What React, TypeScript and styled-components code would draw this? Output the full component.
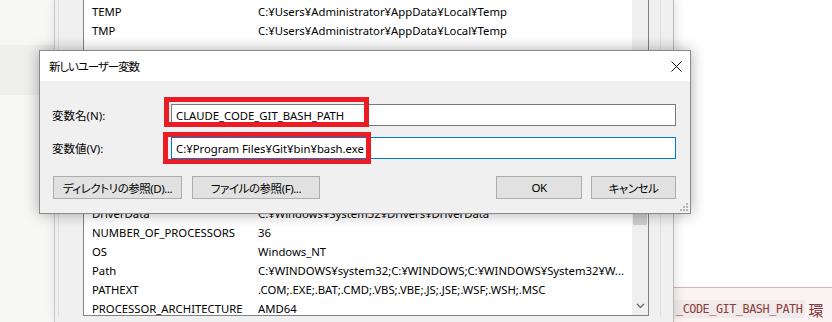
import React from 'react';
import styled, { createGlobalStyle } from 'styled-components';

const GlobalStyle = createGlobalStyle`
  html, body {
    margin: 0;
    padding: 0;
    background: #ffffff;
  }
  body {
    font-family: "Segoe UI", "Noto Sans", "Noto Sans CJK JP", sans-serif;
    font-size: 11.3px;
    color: #000;
    font-feature-settings: "palt";
  }
`;

const uiFont = `"Segoe UI", "Noto Sans", "Noto Sans CJK JP", sans-serif`;
const jaFont = `"Noto Sans CJK JP", sans-serif`;

type EnvRow = { name: string; value: string };

const topRows: EnvRow[] = [
    { name: 'TEMP', value: 'C:¥Users¥Administrator¥AppData¥Local¥Temp' },
    { name: 'TMP', value: 'C:¥Users¥Administrator¥AppData¥Local¥Temp' },
];

const bottomRows: EnvRow[] = [
    { name: 'DriverData', value: 'C:¥Windows¥System32¥Drivers¥DriverData' },
    { name: 'NUMBER_OF_PROCESSORS', value: '36' },
    { name: 'OS', value: 'Windows_NT' },
    { name: 'Path', value: 'C:¥WINDOWS¥system32;C:¥WINDOWS;C:¥WINDOWS¥System32¥W...' },
    { name: 'PATHEXT', value: '.COM;.EXE;.BAT;.CMD;.VBS;.VBE;.JS;.JSE;.WSF;.WSH;.MSC' },
    { name: 'PROCESSOR_ARCHITECTURE', value: 'AMD64' },
];

const App: React.FC = () => {
    return (
        <>
            <GlobalStyle />
            <Screen>
                <LeftPane>
                    <HoverBand />
                </LeftPane>

                <EnvWindow>
                    <GroupFrame>
                        <VarList>
                            <RowsArea>
                                {topRows.map(r => (
                                    <ListRow key={r.name}>
                                        <NameCell>{r.name}</NameCell>
                                        <ValueCell>{r.value}</ValueCell>
                                    </ListRow>
                                ))}
                                <HiddenGap />
                                {bottomRows.map(r => (
                                    <ListRow key={r.name}>
                                        <NameCell>{r.name}</NameCell>
                                        <ValueCell>{r.value}</ValueCell>
                                    </ListRow>
                                ))}
                            </RowsArea>
                            <ScrollBar>
                                <Thumb />
                                <ScrollArrow>
                                    <svg width="9" height="6" viewBox="0 0 9 6">
                                        <path d="M1 1 L4.5 4.5 L8 1" fill="none" stroke="#606060" strokeWidth="1.2" />
                                    </svg>
                                </ScrollArrow>
                            </ScrollBar>
                        </VarList>
                    </GroupFrame>
                </EnvWindow>

                <RightPane>
                    <NoteStrip>
                        <CodeChip>_CODE_GIT_BASH_PATH</CodeChip>
                        <NoteText>環</NoteText>
                    </NoteStrip>
                </RightPane>

                <Dialog>
                    <TitleBar>
                        <Title>新しいユーザー変数</Title>
                        <CloseBtn>
                            <svg width="11" height="11" viewBox="0 0 11 11">
                                <path d="M0.5 0.5 L10.5 10.5 M10.5 0.5 L0.5 10.5" stroke="#111" strokeWidth="1" />
                            </svg>
                        </CloseBtn>
                    </TitleBar>
                    <DialogBody>
                        <FieldRow>
                            <FieldLabel>変数名(N):</FieldLabel>
                            <TextBox>CLAUDE_CODE_GIT_BASH_PATH</TextBox>
                        </FieldRow>
                        <FieldRow>
                            <FieldLabel>変数値(V):</FieldLabel>
                            <TextBox $focused>C:¥Program Files¥Git¥bin¥bash.exe</TextBox>
                        </FieldRow>
                        <ButtonRow>
                            <ButtonGroup>
                                <DlgButton $width={129}>ディレクトリの参照(D)...</DlgButton>
                                <DlgButton $width={128}>ファイルの参照(F)...</DlgButton>
                            </ButtonGroup>
                            <ButtonGroup $gap={9}>
                                <DlgButton $width={86}>OK</DlgButton>
                                <DlgButton $width={85}>キャンセル</DlgButton>
                            </ButtonGroup>
                        </ButtonRow>
                    </DialogBody>
                    <Grip>
                        <svg width="8" height="8" viewBox="0 0 8 8">
                            {[[6, 0], [6, 3], [3, 3], [6, 6], [3, 6], [0, 6]].map(([x, y]) => (
                                <rect key={`${x}-${y}`} x={x} y={y} width="2" height="2" fill="#b4b4b4" />
                            ))}
                        </svg>
                    </Grip>

                    {/* 赤枠の注釈 */}
                    <Highlight $left={124} $top={46} $width={205} $height={30} />
                    <Highlight $left={123} $top={81} $width={208} $height={32} />
                </Dialog>
            </Screen>
        </>
    );
};

const Screen = styled.div`
  position: relative;
  display: flex;
  width: 832px;
  height: 322px;
  overflow: hidden;
  background: #ffffff;
`;

/* 左側：背後のページ */
const LeftPane = styled.div`
  width: 54px;
  flex-shrink: 0;
  background: #f7f7f6;
  padding-top: 45px;
  box-sizing: border-box;
`;

const HoverBand = styled.div`
  height: 50px;
  background: #efefee;
`;

/* 背後の環境変数ウィンドウ */
const EnvWindow = styled.div`
  display: flex;
  width: 620px;
  flex-shrink: 0;
  box-sizing: border-box;
  background: #f0f0f0;
  border-left: 1px solid #c9c9c9;
  border-right: 1px solid #b9b9b9;
  padding: 0 12px 6px 3px;
  box-shadow: 2px 0 10px rgba(0, 0, 0, 0.12);
  z-index: 1;
`;

const GroupFrame = styled.div`
  flex: 1;
  display: flex;
  border-left: 1px solid #dcdcdc;
  border-right: 1px solid #dcdcdc;
  padding: 0 11px 0 24px;
`;

const VarList = styled.div`
  flex: 1;
  display: flex;
  margin-top: -1px;
  border: 1px solid #828282;
  background: #ffffff;
  overflow: hidden;
`;

const RowsArea = styled.div`
  flex: 1;
  padding-top: 2px;
  overflow: hidden;
`;

const ListRow = styled.div`
  display: flex;
  height: 19px;
  align-items: center;
  white-space: nowrap;
  font-family: ${uiFont};
  font-size: 11.3px;
  color: #000;
`;

const NameCell = styled.div`
  width: 166px;
  padding-left: 8px;
  flex-shrink: 0;
`;

const ValueCell = styled.div`
  flex: 1;
  overflow: hidden;
`;

const HiddenGap = styled.div`
  height: 164px;
`;

const ScrollBar = styled.div`
  width: 16px;
  flex-shrink: 0;
  display: flex;
  flex-direction: column;
  background: #f0f0f0;
`;

const Thumb = styled.div`
  margin: 120px 1px 0 1px;
  height: 105px;
  background: #cdcdcd;
`;

const ScrollArrow = styled.div`
  margin-top: auto;
  height: 17px;
  margin-bottom: 1px;
  display: flex;
  align-items: center;
  justify-content: center;
`;

/* 右側：背後のページ */
const RightPane = styled.div`
  flex: 1;
  display: flex;
  flex-direction: column;
  justify-content: flex-end;
  background: #ffffff;
`;

const NoteStrip = styled.div`
  height: 35px;
  box-sizing: border-box;
  border-top: 1px solid #d8b4b4;
  background: #fbf3f3;
  display: flex;
  align-items: center;
  padding-top: 8px;
  white-space: nowrap;
`;

const CodeChip = styled.span`
  font-family: "DejaVu Sans Mono", "Liberation Mono", monospace;
  font-size: 11.8px;
  color: #8c3d3d;
  background: #f1eaea;
  padding: 2px 3px 2px 2px;
  border-radius: 0 3px 3px 0;
  letter-spacing: -0.45px;
`;

const NoteText = styled.span`
  font-family: ${jaFont};
  font-size: 15px;
  color: #7a2e2e;
  margin-left: 3px;
`;

/* 手前のダイアログ */
const Dialog = styled.div`
  position: absolute;
  left: 39px;
  top: 50px;
  width: 652px;
  height: 164px;
  box-sizing: border-box;
  border: 1px solid #8a8a8a;
  background: #f0f0f0;
  box-shadow: 0 0 14px rgba(0, 0, 0, 0.32);
  display: flex;
  flex-direction: column;
  z-index: 5;
  font-family: ${uiFont};
  font-size: 11.3px;
`;

const TitleBar = styled.div`
  height: 30px;
  flex-shrink: 0;
  display: flex;
  align-items: center;
  justify-content: space-between;
  background: #ffffff;
  padding: 0 8px 0 9px;
`;

const Title = styled.div`
  font-family: ${jaFont};
  font-size: 11.5px;
  letter-spacing: -1.1px;
  color: #000;
`;

const CloseBtn = styled.div`
  width: 11px;
  height: 11px;
  display: flex;
`;

const DialogBody = styled.div`
  flex: 1;
  padding: 23px 14px 0 12px;
  display: flex;
  flex-direction: column;
  gap: 11px;
`;

const FieldRow = styled.div`
  display: flex;
  align-items: center;
`;

const FieldLabel = styled.div`
  width: 119px;
  flex-shrink: 0;
  font-size: 11.5px;
  color: #000;
`;

const TextBox = styled.div<{ $focused?: boolean }>`
  flex: 1;
  height: 22px;
  box-sizing: border-box;
  border: 1px solid ${({ $focused }) => ($focused ? '#0078d7' : '#7a7a7a')};
  background: #ffffff;
  padding-left: 4px;
  display: flex;
  align-items: center;
  white-space: nowrap;
  color: #000;
`;

const ButtonRow = styled.div`
  display: flex;
  justify-content: space-between;
  margin-top: 6px;
  padding-left: 1px;
`;

const ButtonGroup = styled.div<{ $gap?: number }>`
  display: flex;
  gap: ${({ $gap }) => $gap ?? 10}px;
`;

const DlgButton = styled.div<{ $width: number }>`
  width: ${({ $width }) => $width}px;
  height: 23px;
  box-sizing: border-box;
  border: 1px solid #adadad;
  background: #e1e1e1;
  display: flex;
  align-items: center;
  justify-content: center;
  white-space: nowrap;
  font-size: 11.5px;
  letter-spacing: -0.45px;
  color: #000;
`;

const Grip = styled.div`
  position: absolute;
  right: 2px;
  bottom: 2px;
  width: 8px;
  height: 8px;
  display: flex;
`;

const Highlight = styled.div<{ $left: number; $top: number; $width: number; $height: number }>`
  position: absolute;
  left: ${({ $left }) => $left}px;
  top: ${({ $top }) => $top}px;
  width: ${({ $width }) => $width}px;
  height: ${({ $height }) => $height}px;
  box-sizing: border-box;
  border: 5px solid #ec1c24;
  pointer-events: none;
`;

export default App;
